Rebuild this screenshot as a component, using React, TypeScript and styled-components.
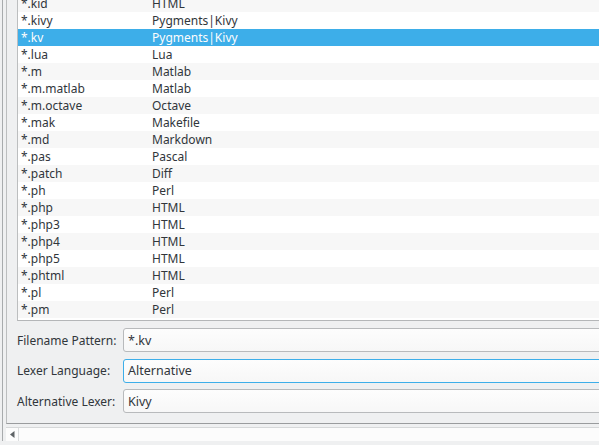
import React from 'react';
import styled, { createGlobalStyle } from 'styled-components';

const GlobalStyle = createGlobalStyle`
    html, body {
        margin: 0;
        padding: 0;
        background: #eff0f1;
    }
    * {
        box-sizing: border-box;
    }
`;

type TAssociation = {
    pattern: string;
    lexer: string;
};

const associations: TAssociation[] = [
    { pattern: '*.kid', lexer: 'HTML' },
    { pattern: '*.kivy', lexer: 'Pygments|Kivy' },
    { pattern: '*.kv', lexer: 'Pygments|Kivy' },
    { pattern: '*.lua', lexer: 'Lua' },
    { pattern: '*.m', lexer: 'Matlab' },
    { pattern: '*.m.matlab', lexer: 'Matlab' },
    { pattern: '*.m.octave', lexer: 'Octave' },
    { pattern: '*.mak', lexer: 'Makefile' },
    { pattern: '*.md', lexer: 'Markdown' },
    { pattern: '*.pas', lexer: 'Pascal' },
    { pattern: '*.patch', lexer: 'Diff' },
    { pattern: '*.ph', lexer: 'Perl' },
    { pattern: '*.php', lexer: 'HTML' },
    { pattern: '*.php3', lexer: 'HTML' },
    { pattern: '*.php4', lexer: 'HTML' },
    { pattern: '*.php5', lexer: 'HTML' },
    { pattern: '*.phtml', lexer: 'HTML' },
    { pattern: '*.pl', lexer: 'Perl' },
    { pattern: '*.pm', lexer: 'Perl' },
];

const selectedPattern = '*.kv';

export default function App() {
    return (
        <>
            <GlobalStyle />
            <Window>
                <Frame>
                    <Panel>
                        <ListView>
                            <ListScroll>
                                {associations.map((item, i) => (
                                    <Row
                                        key={item.pattern}
                                        $alt={i % 2 === 0}
                                        $selected={item.pattern === selectedPattern}
                                    >
                                        <PatternCell>{item.pattern}</PatternCell>
                                        <LexerCell>{item.lexer}</LexerCell>
                                    </Row>
                                ))}
                            </ListScroll>
                        </ListView>
                        <Form>
                            <Label>Filename Pattern:</Label>
                            <Field>*.kv</Field>
                            <Label>Lexer Language:</Label>
                            <Field $focused>Alternative</Field>
                            <Label>Alternative Lexer:</Label>
                            <Field>Kivy</Field>
                        </Form>
                    </Panel>
                    <ScrollBar>
                        <ArrowButton>
                            <svg width="5" height="7" viewBox="0 0 5 7">
                                <path d="M4.5 0 L0 3.5 L4.5 7 Z" fill="#5e6366" />
                            </svg>
                        </ArrowButton>
                        <Track />
                    </ScrollBar>
                </Frame>
            </Window>
        </>
    );
}

const Window = styled.div`
    width: 599px;
    height: 445px;
    padding: 0 0 4px 2px;
    background: #eff0f1;
    overflow: hidden;
    font-family: "Noto Sans", "Open Sans", sans-serif;
    font-size: 12px;
    color: #31363b;
`
const Frame = styled.div`
    display: flex;
    flex-direction: column;
    height: 100%;
    padding-left: 3px;
    border-left: 1px solid #a8abad;
`
const Panel = styled.div`
    display: flex;
    flex-direction: column;
    height: 424px;
    padding: 0 0 10px 10px;
    border-left: 1px solid #bcbebf;
    border-bottom: 1px solid #9a9c9e;
`
const ListView = styled.div`
    height: 321px;
    overflow: hidden;
    background: #fff;
    border-left: 1px solid #bcbebf;
    border-bottom: 1px solid #b4b6b8;
`
const ListScroll = styled.div`
    margin-top: -5px;
`
const Row = styled.div<{ $alt: boolean; $selected: boolean }>`
    display: flex;
    height: 17px;
    align-items: center;
    padding-left: 3px;
    background: ${p => (p.$selected ? '#3daee9' : p.$alt ? '#f7f7f7' : '#fff')};
    color: ${p => (p.$selected ? '#fcfcfc' : '#31363b')};
    white-space: nowrap;
`
const PatternCell = styled.span`
    width: 131px;
`
const LexerCell = styled.span`
    flex: 1;
`
const Form = styled.div`
    display: grid;
    grid-template-columns: 106px 1fr;
    grid-template-rows: 24px 24px 24px;
    row-gap: 6.5px;
    margin-top: 7px;
`
const Label = styled.div`
    display: flex;
    align-items: center;
    white-space: nowrap;
`
const Field = styled.div<{ $focused?: boolean }>`
    display: flex;
    align-items: center;
    padding-left: 4px;
    margin-right: -4px;
    border: 1px solid ${p => (p.$focused ? '#3daee9' : '#b8babc')};
    border-radius: 3px;
    background: linear-gradient(#fdfdfd, #f7f7f7);
    color: #31363b;
    font-size: 12.5px;
`
const ScrollBar = styled.div`
    display: flex;
    height: 15px;
    margin-top: 3px;
    border-top: 1px solid #d6d8d9;
    background: #fcfcfc;
`
const ArrowButton = styled.div`
    display: flex;
    width: 13px;
    align-items: center;
    justify-content: center;
    border-right: 1px solid #dcdedf;
`
const Track = styled.div`
    flex: 1;
`
